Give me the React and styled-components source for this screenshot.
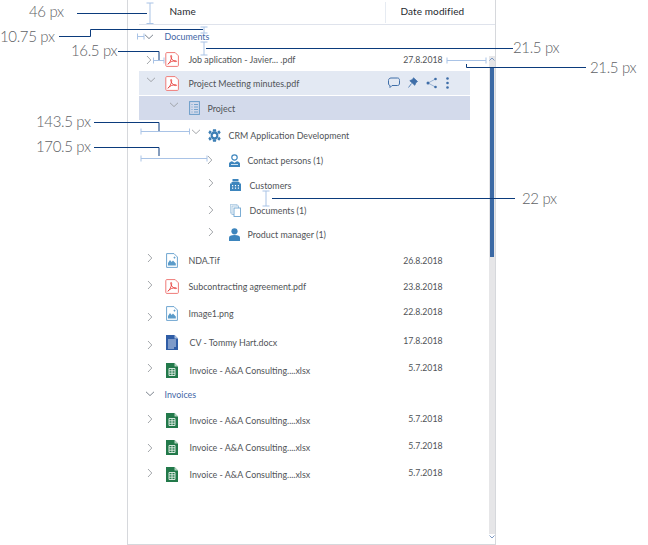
import React from "react";
import styled, { createGlobalStyle } from "styled-components";

const Global = createGlobalStyle`
  html, body { margin: 0; padding: 0; background: #fff; }
  body { font-family: Lato, "Open Sans", sans-serif; }
`;

const Page = styled.div`
  position: relative;
  width: 648px;
  height: 545px;
  overflow: hidden;
  background: #fff;
`;

const Panel = styled.div`
  box-sizing: border-box;
  margin-left: 127px;
  width: 369px;
  height: 545px;
  border-left: 1.5px solid #d6d8dc;
  border-right: 1.5px solid #d6d8dc;
  border-bottom: 1.5px solid #d6d8dc;
  display: flex;
  flex-direction: column;
`;

const Header = styled.div`
  box-sizing: border-box;
  flex: none;
  height: 25px;
  margin-left: 10.5px;
  border-bottom: 1.5px solid #dfe3ec;
  display: flex;
  font-size: 10px;
  letter-spacing: 0.1px;
  color: #26292e;
`;

const NameHead = styled.div`
  width: 246px;
  padding: 5px 0 0 31px;
  box-sizing: border-box;
`;

const DateHead = styled.div`
  height: 18px;
  margin-top: 2px;
  padding: 3px 0 0 15px;
  border-left: 1px solid #e6ebf2;
`;

const Body = styled.div`
  flex: 1;
  display: flex;
  justify-content: space-between;
  min-height: 0;
`;

const Tree = styled.div`
  margin-left: 10.5px;
  width: 331px;
`;

const Row = styled.div`
  box-sizing: border-box;
  height: ${(p) => p.$h}px;
  display: flex;
  align-items: center;
  background: ${(p) => p.$bg || "transparent"};
  margin-bottom: ${(p) => p.$gap || 0}px;
  padding-right: ${(p) => (p.$actions ? 21 : 27)}px;
`;

const ChevronBox = styled.svg`
  flex: none;
  width: 10px;
  height: 6px;
  margin-left: ${(p) => p.$left}px;
  margin-top: ${(p) => Math.max(p.$dy * 2, 0)}px;
  margin-bottom: ${(p) => Math.max(-p.$dy * 2, 0)}px;
  fill: none;
  overflow: visible;
  stroke: ${(p) => p.$stroke};
  stroke-width: 0.9;
`;

const IconSlot = styled.span`
  flex: none;
  display: flex;
  margin-left: ${(p) => p.$left}px;
`;

const Label = styled.span`
  margin-left: ${(p) => p.$left}px;
  font-size: 8.9px;
  white-space: nowrap;
  color: #505357;
`;

const SectionLabel = styled(Label)`
  color: #3f66a6;
`;

const DateCell = styled.span`
  margin-left: auto;
  padding-bottom: ${(p) => p.$up * 2}px;
  font-size: 8.7px;
  color: #505357;
`;

const Actions = styled.span`
  margin-left: auto;
  display: flex;
  align-items: center;
  gap: 8px;
`;

const Scroll = styled.div`
  position: relative;
  width: 6px;
  margin: 31px 0 10px 0;
  background: #e6e6e8;
`;

const ScrollThumb = styled.div`
  margin: 12px 0 0 0.5px;
  width: 4.5px;
  height: 189px;
  background: #3c6aa5;
`;

const ScrollArrow = styled.svg`
  position: absolute;
  left: 0;
  ${(p) => (p.$top ? "top: 1px;" : "bottom: -5px;")}
  width: 6px;
  height: 4px;
  fill: none;
  stroke: #6f8fbd;
  stroke-width: 0.9;
`;

const Overlay = styled.svg`
  position: absolute;
  left: 0;
  top: 0;
  width: 648px;
  height: 545px;
  pointer-events: none;
`;

const Measure = styled.span`
  position: absolute;
  left: ${(p) => p.$x}px;
  top: ${(p) => p.$y}px;
  font-size: 15px;
  font-weight: 300;
  letter-spacing: -0.35px;
  line-height: 18px;
  white-space: nowrap;
  color: #606266;
`;

const PDF = () => (
  <svg width="14" height="15" viewBox="0 0 14 15">
    <path d="M1.800 .6h8.400L13.400 3.800V13.400a1 1 0 0 1-1 1H1.800a1 1 0 0 1-1-1V1.600a1 1 0 0 1 1-1z" fill="#fff" stroke="#ef7b78" strokeWidth="1" />
    <path d="M2.800 12.200C4.200 11.600 6 8.600 6.600 5.400c.2-1.200-.1-2-.5-2-.5 0-.5 1 0 2.200.7 1.800 2.200 3.800 4.600 4 1.500.1 1-1-.5-.9-2.300.1-5 .9-7.400 3.500" fill="none" stroke="#e8413d" strokeWidth=".9" />
  </svg>
);

const Picture = () => (
  <svg width="12" height="15" viewBox="0 0 12 15">
    <path d="M.6.6h7.400L11.400 4V14.400H.6z" fill="#fff" stroke="#6ea5d0" strokeWidth="1" />
    <path d="M2 12.500V10l2-3 1.600 2 1.400-1.500 2.800 3v2z" fill="#5b9bc9" />
    <path d="M7.500 4.600h2M8.500 3.600v2" stroke="#5b9bc9" strokeWidth=".8" />
  </svg>
);

const ProjectDoc = () => (
  <svg width="11" height="14" viewBox="0 0 11 14">
    <rect x=".6" y=".6" width="9.800" height="12.800" fill="none" stroke="#6a9cc9" strokeWidth="1" />
    <path d="M2.500 3.500h1M5 3.500h4M2.500 6h1M5 6h4M2.500 8.500h1M5 8.500h4M2.500 11h1M5 11h4" stroke="#6a9cc9" strokeWidth=".9" />
  </svg>
);

const Word = () => (
  <svg width="12" height="15" viewBox="0 0 12 15">
    <path d="M0 0h8.500L12 3.500V15H0z" fill="#2f5da6" />
    <path d="M8.500 0L12 3.500H8.500z" fill="#a9bfdf" />
    <path d="M2 5h8M2 7h8M2 9h8M2 11h8M2 13h6" stroke="#dfe7f3" strokeWidth=".9" />
  </svg>
);

const Excel = () => (
  <svg width="12" height="15" viewBox="0 0 12 15">
    <path d="M0 0h8.500L12 3.500V15H0z" fill="#22794a" />
    <path d="M8.500 0L12 3.500H8.500z" fill="#b2d3bf" />
    <path d="M3 5.500h6v7H3zM6 5.500v7M3 7.800h6M3 10.200h6" fill="none" stroke="#e6f1ea" strokeWidth=".9" />
  </svg>
);

const Gear = () => (
  <svg width="13" height="13" viewBox="0 0 13 13">
    <path
      d="M6.500 2.600a3.900 3.900 0 1 0 0 7.800 3.900 3.900 0 0 0 0-7.800zm0 2.100a1.800 1.800 0 1 1 0 3.600 1.800 1.800 0 0 1 0-3.600z"
      fill="#3d7fb5"
    />
    <path d="M5 .3h3l.4 2.400h-3.800zM5 12.700h3l.4-2.400h-3.800zM.3 3.600l1.500-2.300 2 1.500-1.800 2.700zM12.700 3.600l-1.500-2.300-2 1.500 1.800 2.700zM.3 9.400l1.500 2.300 2-1.500-1.800-2.700zM12.700 9.400l-1.500 2.300-2-1.500 1.800-2.700z" fill="#3d7fb5" />
  </svg>
);

const PersonOutline = () => (
  <svg width="11" height="13" viewBox="0 0 11 13">
    <circle cx="5.500" cy="3.500" r="2.700" fill="#fff" stroke="#3d85bd" strokeWidth="1.200" />
    <path d="M0 13V9.500c0-1 1.500-2 3-2.300l2.500 1.500L8 7.200c1.500.3 3 1.300 3 2.300V13z" fill="#3d85bd" />
    <rect x="2" y="10" width="7" height="1" fill="#cfe2f0" />
  </svg>
);

const Person = () => (
  <svg width="11" height="13" viewBox="0 0 11 13">
    <circle cx="5.500" cy="3.300" r="3.100" fill="#3d85bd" />
    <path d="M0 13V9.500c0-1.300 1.800-2.500 5.500-2.500s5.500 1.200 5.500 2.500V13z" fill="#3d85bd" />
  </svg>
);

const Building = () => (
  <svg width="11" height="12" viewBox="0 0 11 12">
    <path d="M2.500 0h6v2.500h-6zM1.500 3h8v1.500h1.500V12H0V4.500h1.500z" fill="#3d85bd" />
    <path d="M2 6h1.200v1.200H2zM4.900 6h1.200v1.200H4.900zM7.800 6H9v1.200H7.800zM2 8.500h1.200v1.200H2zM4.900 8.500h1.200v1.200H4.900zM7.800 8.500H9v1.200H7.800z" fill="#fff" />
  </svg>
);

const Copies = () => (
  <svg width="11" height="13" viewBox="0 0 11 13" fill="#fff" stroke="#7fb0d6" strokeWidth=".9">
    <rect x=".5" y=".5" width="6.500" height="8.500" stroke="#b5d0e6" />
    <rect x="2" y="2" width="6.500" height="8.500" stroke="#9dc1de" />
    <rect x="4" y="4" width="6.500" height="8.500" stroke="#6ea5d0" />
  </svg>
);

const ActionIcon = ({ w, children }) => (
  <svg width={w} height="12" viewBox={`0 0 ${w} 12`} fill="none" stroke="#3f6ea8">
    {children}
  </svg>
);

const ICONS = { pdf: PDF, pic: Picture, proj: ProjectDoc, word: Word, xls: Excel, gear: Gear, pout: PersonOutline, person: Person, bld: Building, copies: Copies };
const WIDTHS = { pdf: 14, pic: 12, proj: 11, word: 12, xls: 12, gear: 13, pout: 11, person: 11, bld: 11, copies: 11 };

const rows = [
  { h: 23, dir: "down", cx: 149, section: true, label: "Documents", lx: 165 },
  { h: 23, dir: "right", cx: 149, icon: "pdf", ix: 165, label: "Job aplication - Javier... .pdf", lx: 189, date: "27.8.2018" },
  { h: 24, gap: 1, dir: "down", cx: 151, cy: -3, icon: "pdf", ix: 165, label: "Project Meeting minutes.pdf", lx: 189, bg: "#e3e9f3", actions: true },
  { h: 24, dir: "down", cx: 174, cy: -3, icon: "proj", ix: 189, label: "Project", lx: 208, bg: "#d3daeb" },
  { h: 30, dir: "down", cx: 196, cy: -3, icon: "gear", ix: 208, label: "CRM Application Development", lx: 229 },
  { h: 20, dir: "right", cx: 210, icon: "pout", ix: 229, label: "Contact persons (1)", lx: 248 },
  { h: 30, dir: "right", cx: 211, cy: -2, icon: "bld", ix: 230, label: "Customers", lx: 250 },
  { h: 20, dir: "right", cx: 211, icon: "copies", ix: 230, label: "Documents (1)", lx: 250 },
  { h: 28, dir: "right", cx: 211, cy: -2, icon: "person", ix: 229, label: "Product manager (1)", lx: 248 },
  { h: 24, dir: "right", cx: 150, cy: -2, icon: "pic", ix: 166, label: "NDA.Tif", lx: 189, date: "26.8.2018" },
  { h: 28, dir: "right", cx: 150, cy: -1, icon: "pdf", ix: 165, label: "Subcontracting agreement.pdf", lx: 189, date: "23.8.2018" },
  { h: 26, dir: "right", cx: 150, cy: 4, icon: "pic", ix: 166, label: "Image1.png", lx: 189, date: "22.8.2018", up: 2 },
  { h: 32, dir: "right", cx: 150, cy: 3, icon: "word", ix: 166, label: "CV - Tommy Hart.docx", lx: 190, date: "17.8.2018", up: 2 },
  { h: 24, dir: "right", cx: 150, cy: -2, icon: "xls", ix: 166, label: "Invoice - A&A Consulting....xlsx", lx: 190, date: "5.7.2018", up: 3 },
  { h: 24, dir: "down", cx: 150, section: true, label: "Invoices", lx: 165 },
  { h: 28, dir: "right", cx: 150, cy: -1, icon: "xls", ix: 166, label: "Invoice - A&A Consulting....xlsx", lx: 190, date: "5.7.2018", up: 2 },
  { h: 26, dir: "right", cx: 150, cy: 1, icon: "xls", ix: 166, label: "Invoice - A&A Consulting....xlsx", lx: 190, date: "5.7.2018", up: 2 },
  { h: 28, dir: "right", cx: 150, cy: -1, icon: "xls", ix: 166, label: "Invoice - A&A Consulting....xlsx", lx: 190, date: "5.7.2018", up: 2 },
];

const Chevron = ({ dir, left, dy, section }) => (
  <ChevronBox $left={left} $dy={dy} viewBox="0 0 10 6" $stroke={section ? "#6b7480" : "#9a9da2"}>
    {dir === "down" ? (
      <path d="M1 .8L5 4.600 9 .8" />
    ) : (
      <path d="M3 -1L6.800 3 3 7" />
    )}
  </ChevronBox>
);

const TreeRow = ({ r }) => {
  const Left = 139;
  const chevEnd = r.cx + 5;
  const Icon = r.icon ? ICONS[r.icon] : null;
  const iw = r.icon ? WIDTHS[r.icon] : 0;
  const LabelPart = r.section ? SectionLabel : Label;
  return (
    <Row $h={r.h} $bg={r.bg} $gap={r.gap} $actions={r.actions}>
      <Chevron dir={r.dir} left={r.cx - 5 - Left} dy={r.cy || 0} section={r.section} />
      {Icon && (
        <IconSlot $left={r.ix - chevEnd}>
          <Icon />
        </IconSlot>
      )}
      <LabelPart $left={r.lx - (Icon ? r.ix + iw : chevEnd)}>{r.label}</LabelPart>
      {r.date && <DateCell $up={r.up || 0}>{r.date}</DateCell>}
      {r.actions && (
        <Actions>
          <ActionIcon w={12}>
            <path d="M3 1h6.500C11 1 11.500 2 11.500 3.500v2.500c0 1.500-.5 2.500-2 2.500H4L2 10.500V8.500C1 8.500.5 7.500.5 6V3.500C.5 2 1.500 1 3 1z" strokeWidth="1" />
          </ActionIcon>
          <ActionIcon w={10}>
            <path d="M5.500.8L9.500 4.500 8 5.500 6.800 8.300 1.800 3.700 4.500 2.500zM3.500 6.500L.5 10.500" fill="#3f6ea8" strokeWidth=".8" />
          </ActionIcon>
          <ActionIcon w={12}>
            <path d="M2 6L9.500 2M2 6L9.500 10" strokeWidth=".7" stroke="#7d9cc6" />
            <circle cx="2" cy="6" r="1.500" fill="#3f6ea8" stroke="none" />
            <circle cx="9.500" cy="2" r="1.300" fill="#3f6ea8" stroke="none" />
            <circle cx="9.500" cy="10" r="1.300" fill="#3f6ea8" stroke="none" />
          </ActionIcon>
          <ActionIcon w={3}>
            <circle cx="1.500" cy="1.500" r="1.300" fill="#3f6ea8" stroke="none" />
            <circle cx="1.500" cy="6" r="1.300" fill="#3f6ea8" stroke="none" />
            <circle cx="1.500" cy="10.500" r="1.300" fill="#3f6ea8" stroke="none" />
          </ActionIcon>
        </Actions>
      )}
    </Row>
  );
};

const NAVY = "#0b3b7c";
const LIGHT = "#a9c3e6";

const hMeasure = (x1, x2, y) => `M${x1} ${y}H${x2}M${x1} ${y - 3}V${y + 3}M${x2} ${y - 3}V${y + 3}`;
const vMeasure = (x, y1, y2) => `M${x} ${y1}V${y2}M${x - 3.500} ${y1}H${x + 3.500}M${x - 3.500} ${y2}H${x + 3.500}`;

const lightPaths = [
  vMeasure(150, 3, 23.5),
  hMeasure(137.500, 144, 36.500),
  vMeasure(204, 27, 33),
  vMeasure(204, 42, 55),
  hMeasure(153.500, 164, 60.500),
  hMeasure(447, 486, 60.500),
  hMeasure(141, 189.500, 131.500),
  hMeasure(141, 207, 158.500),
  vMeasure(266, 191, 206),
];

const navyPaths = [
  "M77 13.500H147",
  "M59 36.500H90.500V29.500H203",
  "M118 51.500H159V60",
  "M206 48.500H513",
  "M466.500 64V67.500H586",
  "M94 122.500H159V131",
  "M94 147.500H159V156",
  "M272 198.500H515",
];

const labels = [
  ["46 px", 29, 2],
  ["10.75 px", 0, 27],
  ["16.5 px", 71, 41],
  ["143.5 px", 36, 112],
  ["170.5 px", 36, 137],
  ["21.5 px", 513, 38],
  ["21.5 px", 590, 58],
  ["22 px", 522, 189],
];

export default function App() {
  return (
    <>
      <Global />
      <Page>
        <Panel>
          <Header>
            <NameHead>Name</NameHead>
            <DateHead>Date modified</DateHead>
          </Header>
          <Body>
            <Tree>
              {rows.map((r, i) => (
                <TreeRow key={i} r={r} />
              ))}
            </Tree>
            <Scroll>
              <ScrollArrow $top viewBox="0 0 6 4"><path d="M.5 3.500L3 1l2.500 2.500" /></ScrollArrow>
              <ScrollThumb />
              <ScrollArrow viewBox="0 0 6 4"><path d="M.5 .5L3 3l2.500-2.500" /></ScrollArrow>
            </Scroll>
          </Body>
        </Panel>
        <Overlay viewBox="0 0 648 545" fill="none">
          <path d={lightPaths.join("")} stroke={LIGHT} strokeWidth="1" />
          <path d={navyPaths.join("")} stroke={NAVY} strokeWidth="1" />
        </Overlay>
        {labels.map(([t, x, y]) => (
          <Measure key={t + x} $x={x} $y={y}>{t}</Measure>
        ))}
      </Page>
    </>
  );
}
